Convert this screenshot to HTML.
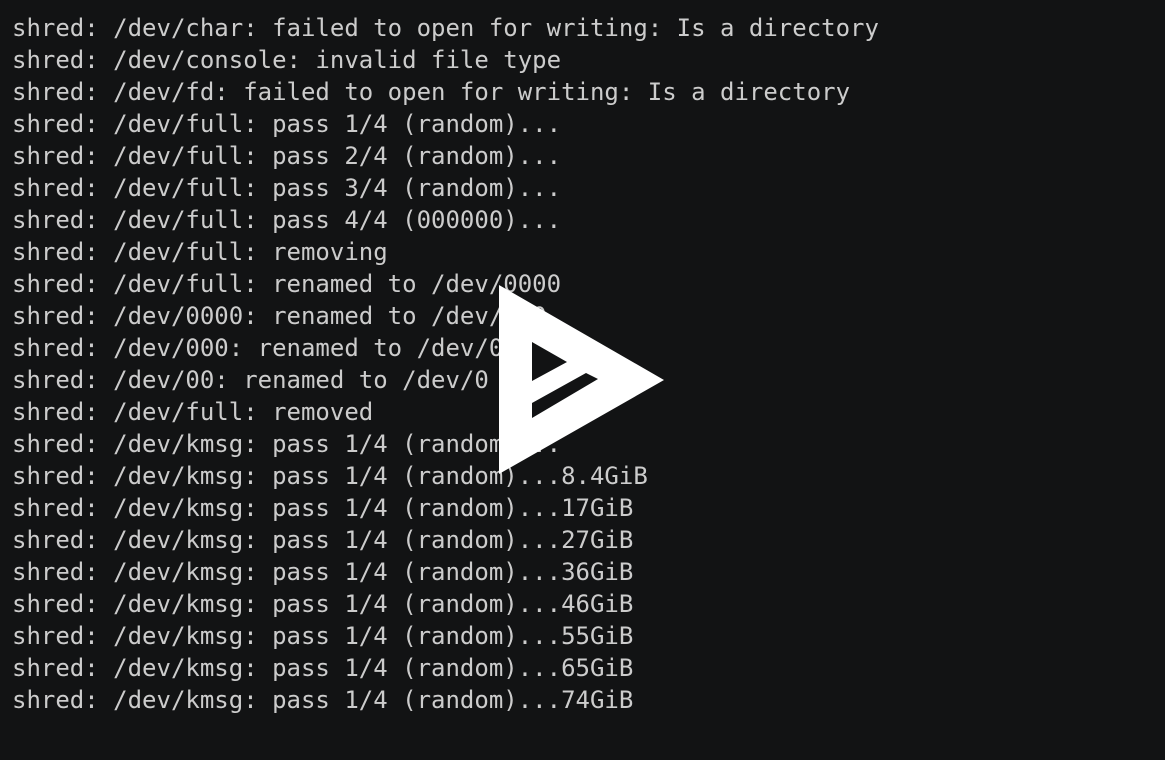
<!DOCTYPE html>
<html><head><meta charset="utf-8"><style>
html,body{margin:0;padding:0;background:#121314;width:1165px;height:760px;overflow:hidden}
pre{margin:0;padding:12px 0 0 12px;font-family:"DejaVu Sans Mono","Liberation Mono",monospace;font-size:24px;line-height:32px;color:#cccccc}
svg{position:absolute;left:0;top:0}
</style></head><body>
<pre>shred: /dev/char: failed to open for writing: Is a directory
shred: /dev/console: invalid file type
shred: /dev/fd: failed to open for writing: Is a directory
shred: /dev/full: pass 1/4 (random)...
shred: /dev/full: pass 2/4 (random)...
shred: /dev/full: pass 3/4 (random)...
shred: /dev/full: pass 4/4 (000000)...
shred: /dev/full: removing
shred: /dev/full: renamed to /dev/0000
shred: /dev/0000: renamed to /dev/000
shred: /dev/000: renamed to /dev/00
shred: /dev/00: renamed to /dev/0
shred: /dev/full: removed
shred: /dev/kmsg: pass 1/4 (random)...
shred: /dev/kmsg: pass 1/4 (random)...8.4GiB
shred: /dev/kmsg: pass 1/4 (random)...17GiB
shred: /dev/kmsg: pass 1/4 (random)...27GiB
shred: /dev/kmsg: pass 1/4 (random)...36GiB
shred: /dev/kmsg: pass 1/4 (random)...46GiB
shred: /dev/kmsg: pass 1/4 (random)...55GiB
shred: /dev/kmsg: pass 1/4 (random)...65GiB
shred: /dev/kmsg: pass 1/4 (random)...74GiB</pre>
<svg width="1165" height="760">
<path fill="#fff" fill-rule="evenodd" d="M499 285 L664 380 L499 474 Z M532 342 L532 381 L567 362 Z M532 403 L586 373 L598 379 L532 418 Z"/>
</svg>
</body></html>
